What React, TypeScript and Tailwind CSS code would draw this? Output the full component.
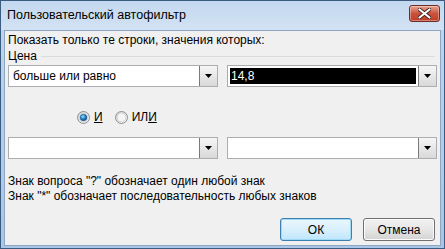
import React from "react";

const font = { fontFamily: '"Liberation Sans", Arial, sans-serif' };

function Arrow() {
  return (
    <svg width="7" height="4" viewBox="0 0 7 4">
      <path d="M0 0H7L3.5 4Z" fill="#000" />
    </svg>
  );
}

function Combo({ value, selected }: { value?: string; selected?: boolean }) {
  return (
    <div className="w-[210px] h-[22px] flex border border-[#abadb3] bg-white">
      <div className="flex-1 flex items-center p-[2px]">
        {selected ? (
          <div className="w-full h-full bg-black text-white text-[12px] leading-[16px] pl-[1px] flex items-center">{value}</div>
        ) : (
          <div className="text-[12px] leading-[16px] pl-[2px] text-black">{value}</div>
        )}
      </div>
      <div className="w-[18px] h-full border-l border-[#7a7a7a] bg-gradient-to-b from-[#f6f6f6] to-[#d8d8d8] flex items-center justify-center">
        <Arrow />
      </div>
    </div>
  );
}

function Radio({ checked }: { checked?: boolean }) {
  return (
    <svg width="13" height="13" viewBox="0 0 13 13">
      <defs>
        <linearGradient id="rg" x1="0" y1="0" x2="1" y2="1">
          <stop offset="0" stopColor="#d9d9d9" />
          <stop offset="1" stopColor="#ffffff" />
        </linearGradient>
        <radialGradient id="dot" cx="0.4" cy="0.35" r="0.7">
          <stop offset="0" stopColor="#9fe3ff" />
          <stop offset="0.5" stopColor="#1d8ad4" />
          <stop offset="1" stopColor="#0c3f77" />
        </radialGradient>
      </defs>
      <circle cx="6.5" cy="6.5" r="6" fill="url(#rg)" stroke="#8e8f8f" strokeWidth="1" />
      <circle cx="6.5" cy="6.5" r="4.5" fill="#f4f4f4" stroke="#c4c4c4" strokeWidth="0.8" />
      {checked && <circle cx="6.5" cy="6.5" r="3.3" fill="url(#dot)" stroke="#1b4f85" strokeWidth="0.6" />}
    </svg>
  );
}

function Button({ label, def }: { label: string; def?: boolean }) {
  return (
    <div
      className={
        "w-[72px] h-[23px] rounded-[3px] border flex items-center justify-center text-[12px] text-black " +
        (def
          ? "border-[#3c7fb1] shadow-[inset_0_0_0_1px_#9fd9f4] bg-gradient-to-b from-[#eaf6fd] via-[#d9f0fc] to-[#bee6fd]"
          : "border-[#707070] shadow-[inset_0_0_0_1px_#fbfbfb] bg-gradient-to-b from-[#f2f2f2] via-[#e6e6e6] to-[#d3d3d3]")
      }
    >
      {label}
    </div>
  );
}

export default function App() {
  return (
    <div
      className="w-[445px] h-[249px] flex flex-col border border-[#3a5c80] bg-gradient-to-b from-[#c0d6ee] to-[#a9c6e6] overflow-hidden"
      style={font}
    >
      <div className="h-[29px] flex items-start justify-between pl-[6px] pr-[4px] bg-gradient-to-b from-[#c3d8ef] to-[#d3e2f3]">
        <div className="mt-[6px] text-[12.5px] leading-[16px] text-black">Пользовательский автофильтр</div>
        <div className="mt-[4px] w-[31px] h-[17px] rounded-[3px] border border-[#6e2b27] bg-gradient-to-b from-[#e8a493] via-[#c9523c] to-[#c23d27] flex items-center justify-center shadow-[inset_0_0_0_1px_rgba(255,255,255,0.35)]">
          <svg width="13" height="11" viewBox="0 0 13 11">
            <path d="M1.5 1.5L11.5 9.5M11.5 1.5L1.5 9.5" stroke="#3a1a16" strokeWidth="3.6" strokeLinecap="round" />
            <path d="M1.5 1.5L11.5 9.5M11.5 1.5L1.5 9.5" stroke="#ffffff" strokeWidth="2.2" strokeLinecap="round" />
          </svg>
        </div>
      </div>
      <div className="flex-1 mx-[3px] mb-[2px] bg-[#f0f0f0] border border-[#8da6c4] flex flex-col px-[3px] text-black">
        <div className="mt-[1px] text-[12px] leading-[16px]">Показать только те строки, значения которых:</div>
        <div className="flex items-center gap-[4px] mt-[1px] h-[15px]">
          <span className="text-[12px] leading-[15px]">Цена</span>
          <div className="flex-1 h-px bg-[#dcdcdc] mr-[2px]" />
        </div>
        <div className="flex justify-between mt-[1px]">
          <Combo value="больше или равно" />
          <Combo value="14,8" selected />
        </div>
        <div className="flex items-center mt-[23px] ml-[69px] h-[14px] text-[12px]">
          <Radio checked />
          <span className="ml-[4px] underline">И</span>
          <span className="ml-[12px]"><Radio /></span>
          <span className="ml-[4px]">
            ИЛ<span className="underline">И</span>
          </span>
        </div>
        <div className="flex justify-between mt-[13px]">
          <Combo />
          <Combo />
        </div>
        <div className="mt-[15px] text-[12px] leading-[15px]">Знак вопроса "?" обозначает один любой знак</div>
        <div className="text-[12px] leading-[15px]">Знак "*" обозначает последовательность любых знаков</div>
        <div className="flex justify-end gap-[11px] mt-[14px] mr-[2px]">
          <Button label="ОК" def />
          <Button label="Отмена" />
        </div>
      </div>
    </div>
  );
}
